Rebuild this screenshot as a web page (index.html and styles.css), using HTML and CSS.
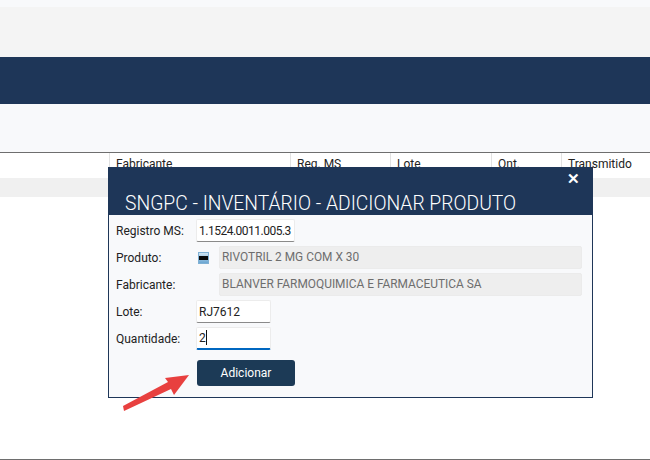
FILE: index.html
```html
<!DOCTYPE html>
<html lang="pt-BR">
<head>
  <meta charset="UTF-8" />
  <title>SNGPC - Inventário</title>
  <link rel="stylesheet" href="styles.css">
</head>
<body>
  <div class="top-strip"></div>
  <div class="toolbar"></div>
  <div class="navbar"></div>
  <div class="filters"></div>

  <div class="table-head">
    <div class="col col-first"></div>
    <div class="col col-fab">Fabricante</div>
    <div class="col col-reg">Reg. MS</div>
    <div class="col col-lote">Lote</div>
    <div class="col col-qnt">Qnt.</div>
    <div class="col col-trans">Transmitido</div>
  </div>
  <div class="table-row"></div>
  <div class="table-body"></div>
  <div class="bottom-line"></div>

  <div class="dialog">
    <div class="dialog-title">
      <span class="dialog-close">✕</span>
      <h1>SNGPC - INVENTÁRIO - ADICIONAR PRODUTO</h1>
    </div>
    <div class="dialog-body">
      <div class="form-row">
        <label>Registro MS:</label>
        <input class="field field-reg" type="text" value="1.1524.0011.005.3" />
      </div>
      <div class="form-row">
        <label>Produto:</label>
        <span class="prod-icon"><span class="prod-icon-bar"></span></span>
        <div class="readonly">RIVOTRIL 2 MG COM X 30</div>
      </div>
      <div class="form-row">
        <label>Fabricante:</label>
        <div class="readonly readonly-fab">BLANVER FARMOQUIMICA E FARMACEUTICA SA</div>
      </div>
      <div class="form-row">
        <label>Lote:</label>
        <input class="field field-short" type="text" value="RJ7612" />
      </div>
      <div class="form-row">
        <label>Quantidade:</label>
        <div class="field field-short field-focus">2<span class="caret"></span></div>
      </div>
      <button class="btn-add">Adicionar</button>
    </div>
  </div>

  <svg class="arrow" width="80" height="50" viewBox="0 0 80 50">
    <path d="M4 46 L3 41 L48 17 L45 13 L69 10 L54 30 L51 24 Z" fill="#e8403f" />
  </svg>
</body>
</html>
```

FILE: styles.css
```css
* {
  box-sizing: border-box;
}
html, body {
  height: 100%;
}
body {
  margin: 0;
  height: 460px;
  overflow: hidden;
  display: flex;
  flex-direction: column;
  position: relative;
  background: #fff;
  color: #222;
  font-family: Roboto, "Noto Sans", sans-serif;
  font-size: 12px;
}
.top-strip {
  height: 7px;
  background: #f8f9fb;
}
.toolbar {
  height: 50px;
  background: #f4f4f4;
}
.navbar {
  height: 47px;
  background: #1e3658;
}
.filters {
  height: 48px;
  background: #f8f9fb;
}
.table-head {
  height: 26px;
  display: flex;
  border-top: 1px solid #6e6e6e;
}
.col {
  padding: 3px 0 0 6px;
  border-left: 1px solid #e2e2e2;
  line-height: 16px;
}
.col-first {
  width: 109px;
  border-left: 0;
}
.col-fab { width: 181px; }
.col-reg { width: 100px; }
.col-lote { width: 101px; }
.col-qnt { width: 70px; }
.col-trans { flex: 1; }
.table-row {
  height: 19px;
  background: #f0f0f0;
}
.table-body {
  flex: 1;
}
.bottom-line {
  height: 1px;
  background: #6e6e6e;
}
.dialog {
  position: absolute;
  left: 108px;
  top: 167px;
  width: 485px;
  height: 231px;
  border: 1px solid #1e3658;
  background: #f8f9fb;
}
.dialog-title {
  height: 47px;
  background: #1e3658;
  color: #fff;
  position: relative;
}
.dialog-title h1 {
  margin: 0;
  padding: 24px 0 0 16px;
  font-size: 19.3px;
  font-weight: 300;
  line-height: 24px;
  white-space: nowrap;
}
.dialog-close {
  position: absolute;
  right: 12px;
  top: 2px;
  font-size: 15px;
  font-weight: 700;
  line-height: 18px;
}
.dialog-body {
  padding: 2px 10px 0 7px;
}
.form-row {
  height: 27px;
  display: flex;
  align-items: center;
}
.form-row label {
  width: 80px;
  flex: none;
}
.field {
  height: 23px;
  border: 1px solid #ececec;
  border-bottom: 1px solid #8a8a8a;
  border-radius: 2px;
  background: #fff;
  padding: 0 2px;
  color: #222;
  font: inherit;
  line-height: 21px;
  outline: none;
}
.field-reg {
  width: 99px;
  letter-spacing: -0.5px;
}
.field-short {
  width: 75px;
}
.field-focus {
  border-bottom: 2px solid #0067c0;
}
.caret {
  display: inline-block;
  width: 1px;
  height: 15px;
  background: #111;
  vertical-align: -3px;
}
.prod-icon {
  width: 11px;
  height: 12px;
  margin: 0 10px 0 2px;
  flex: none;
  display: flex;
  align-items: center;
  background: linear-gradient(#cfe4f2, #6aa6d2);
  border: 1px solid #7fb0d4;
}
.prod-icon-bar {
  width: 100%;
  height: 4px;
  background: #0a0a0a;
}
.readonly {
  width: 363px;
  height: 23px;
  border: 1px solid #ebebeb;
  border-radius: 2px;
  background: #eeeeee;
  color: #6d6d6d;
  padding-left: 2px;
  font-size: 11.9px;
  line-height: 21px;
  white-space: nowrap;
}
.readonly-fab {
  margin-left: 23px;
}
.btn-add {
  display: block;
  margin: 8px 0 0 81px;
  width: 98px;
  height: 26px;
  border: 0;
  border-radius: 3px;
  background: #1c3a56;
  color: #fff;
  font: inherit;
  cursor: pointer;
}
.arrow {
  position: absolute;
  left: 120px;
  top: 365px;
}
```
